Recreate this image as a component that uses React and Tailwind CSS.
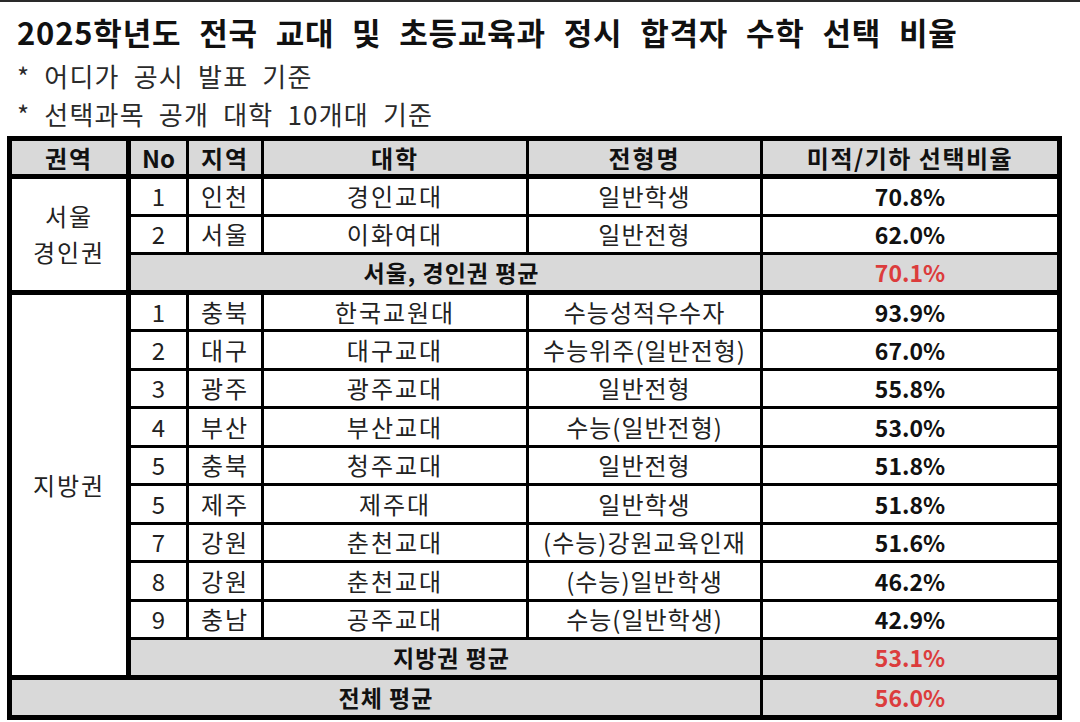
export default function App() {
  const groups = [
    {
      region: ["서울", "경인권"],
      rows: [
        { no: 1, area: "인천", univ: "경인교대", type: "일반학생", ratio: "70.8%" },
        { no: 2, area: "서울", univ: "이화여대", type: "일반전형", ratio: "62.0%" },
      ],
      avgLabel: "서울, 경인권 평균",
      avg: "70.1%",
    },
    {
      region: ["지방권"],
      rows: [
        { no: 1, area: "충북", univ: "한국교원대", type: "수능성적우수자", ratio: "93.9%" },
        { no: 2, area: "대구", univ: "대구교대", type: "수능위주(일반전형)", ratio: "67.0%" },
        { no: 3, area: "광주", univ: "광주교대", type: "일반전형", ratio: "55.8%" },
        { no: 4, area: "부산", univ: "부산교대", type: "수능(일반전형)", ratio: "53.0%" },
        { no: 5, area: "충북", univ: "청주교대", type: "일반전형", ratio: "51.8%" },
        { no: 5, area: "제주", univ: "제주대", type: "일반학생", ratio: "51.8%" },
        { no: 7, area: "강원", univ: "춘천교대", type: "(수능)강원교육인재", ratio: "51.6%" },
        { no: 8, area: "강원", univ: "춘천교대", type: "(수능)일반학생", ratio: "46.2%" },
        { no: 9, area: "충남", univ: "공주교대", type: "수능(일반학생)", ratio: "42.9%" },
      ],
      avgLabel: "지방권 평균",
      avg: "53.1%",
    },
  ];

  const cell = "border-[3px] border-black p-0 text-center align-middle";
  const head = `${cell} border-b-[5px] bg-[#d9d9d9] font-bold text-[#111]`;
  const bold = "font-bold text-[23px] text-[#111]";

  return (
    <div className="w-[1080px] h-[722px] overflow-hidden bg-white border-t-2 border-[#2a2a2a] font-['Noto_Sans_CJK_KR','Noto_Sans',sans-serif]">
      {/* Title */}
      <div className="pl-[17px] pt-[7px]">
        <h1 className="text-[31px] leading-[46px] font-bold text-[#111] tracking-[0.8px] [word-spacing:10px]">
          2025학년도 전국 교대 및 초등교육과 정시 합격자 수학 선택 비율
        </h1>
        <p className="text-[26px] leading-[38px] text-[#2a2a2a] mt-[2px] tracking-[1.2px] [word-spacing:7px]">
          * 어디가 공시 발표 기준
        </p>
        <p className="text-[26px] leading-[38px] text-[#2a2a2a] tracking-[1.2px] [word-spacing:7px]">
          * 선택과목 공개 대학 10개대 기준
        </p>
      </div>

      {/* Table */}
      <table className="ml-[7px] mt-[3px] w-[1055px] table-fixed border-collapse border-[5px] border-black text-[24px] leading-[28px] text-[#222] tracking-[2px]">
        <colgroup>
          <col className="w-[119px]" />
          <col className="w-[59px]" />
          <col className="w-[75px]" />
          <col className="w-[265px]" />
          <col className="w-[234px]" />
          <col className="w-[298px]" />
        </colgroup>
        <thead>
          <tr className="h-[38px]">
            <th className={`${head} border-r-[5px]`}>권역</th>
            <th className={`${head} tracking-normal`}>No</th>
            <th className={head}>지역</th>
            <th className={head}>대학</th>
            <th className={head}>전형명</th>
            <th className={`${head} tracking-[1.5px]`}>미적/기하 선택비율</th>
          </tr>
        </thead>
        <tbody>
          {groups.map((g) => (
            <>
              {g.rows.map((r, i) => (
                <tr key={g.avgLabel + i} className="h-[38.5px]">
                  {i === 0 && (
                    <td
                      rowSpan={g.rows.length + 1}
                      className={`${cell} border-r-[5px] border-b-[5px] leading-[36px]`}
                    >
                      {g.region.map((t) => (
                        <div key={t}>{t}</div>
                      ))}
                    </td>
                  )}
                  <td className={`${cell} tracking-normal`}>{r.no}</td>
                  <td className={cell}>{r.area}</td>
                  <td className={cell}>{r.univ}</td>
                  <td className={`${cell} tracking-[1px]`}>{r.type}</td>
                  <td className={`${cell} ${bold} tracking-normal`}>{r.ratio}</td>
                </tr>
              ))}
              <tr className="h-[38.5px] bg-[#d9d9d9]">
                <td colSpan={4} className={`${cell} border-b-[5px] ${bold} tracking-[1px] pl-[12px]`}>
                  {g.avgLabel}
                </td>
                <td className={`${cell} border-b-[5px] font-bold text-[23px] text-[#dc3c3c] tracking-normal`}>
                  {g.avg}
                </td>
              </tr>
            </>
          ))}
          <tr className="h-[40px] bg-[#d9d9d9]">
            <td colSpan={5} className={`${cell} ${bold} tracking-[1px]`}>
              전체 평균
            </td>
            <td className={`${cell} font-bold text-[23px] text-[#dc3c3c] tracking-normal`}>
              56.0%
            </td>
          </tr>
        </tbody>
      </table>
    </div>
  );
}
